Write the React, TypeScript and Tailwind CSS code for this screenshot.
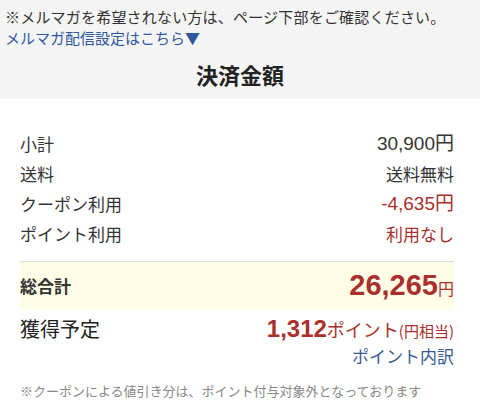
const jp = { fontFamily: '"Noto Sans CJK JP", "Noto Sans", sans-serif' }
const num = { fontFamily: '"Liberation Sans", "Noto Sans CJK JP", sans-serif' }

function Row({ label, value, red, numeric }: { label: string; value: string; red?: boolean; numeric?: boolean }) {
  return (
    <div className="flex items-center justify-between h-[30px]">
      <span className="text-[17px] text-[#333]">{label}</span>
      <span
        className={`${numeric ? 'text-[19px]' : 'text-[17px]'} ${red ? 'text-[#a9302c]' : 'text-[#333]'}`}
        style={numeric ? num : undefined}
      >
        {value}
      </span>
    </div>
  )
}

export default function App() {
  return (
    <div className="w-[480px] h-[407px] bg-white overflow-hidden" style={jp}>
      {/* notice + title */}
      <div className="bg-[#f5f5f5] pt-[6px] pb-[10px]">
        <p className="pl-[5px] text-[15px] leading-[21px] text-[#333] tracking-[0.2px]">
          ※メルマガを希望されない方は、ページ下部をご確認ください。
        </p>
        <a className="block pl-[5px] text-[15px] leading-[21px] text-[#2f57a0]">
          メルマガ配信設定はこちら▼
        </a>
        <h2 className="mt-[11px] text-center text-[22px] leading-[30px] font-bold text-[#222]">
          決済金額
        </h2>
      </div>

      <div className="ml-[20px] mr-[26px] pt-[30px]">
        <Row label="小計" value="30,900円" numeric />
        <Row label="送料" value="送料無料" />
        <Row label="クーポン利用" value="-4,635円" red numeric />
        <Row label="ポイント利用" value="利用なし" red />

        {/* total */}
        <div className="mt-[12px] border-t border-[#dcdcdc] bg-[#fffde6] h-[48px] flex items-center justify-between">
          <span className="text-[17px] font-bold text-[#333]">総合計</span>
          <span className="text-[#a9302c] font-bold flex items-baseline">
            <span className="text-[29px] leading-none" style={num}>26,265</span>
            <span className="text-[16px] font-normal leading-none">円</span>
          </span>
        </div>

        {/* points */}
        <div className="mt-[5px] flex justify-between items-start">
          <span className="text-[20px] leading-[30px] text-[#222]">獲得予定</span>
          <div className="flex flex-col items-end">
            <span className="text-[#a9302c] flex items-baseline h-[30px] leading-[30px]">
              <span className="text-[24px] font-bold" style={num}>1,312</span>
              <span className="text-[18px]">ポイント</span>
              <span className="text-[15px]">(円相当)</span>
            </span>
            <a className="text-[17px] leading-[24px] text-[#3a5a95]">ポイント内訳</a>
          </div>
        </div>

        <p className="mt-[14px] text-[13px] leading-[18px] text-[#888]">
          ※クーポンによる値引き分は、ポイント付与対象外となっております
        </p>
      </div>
    </div>
  )
}
